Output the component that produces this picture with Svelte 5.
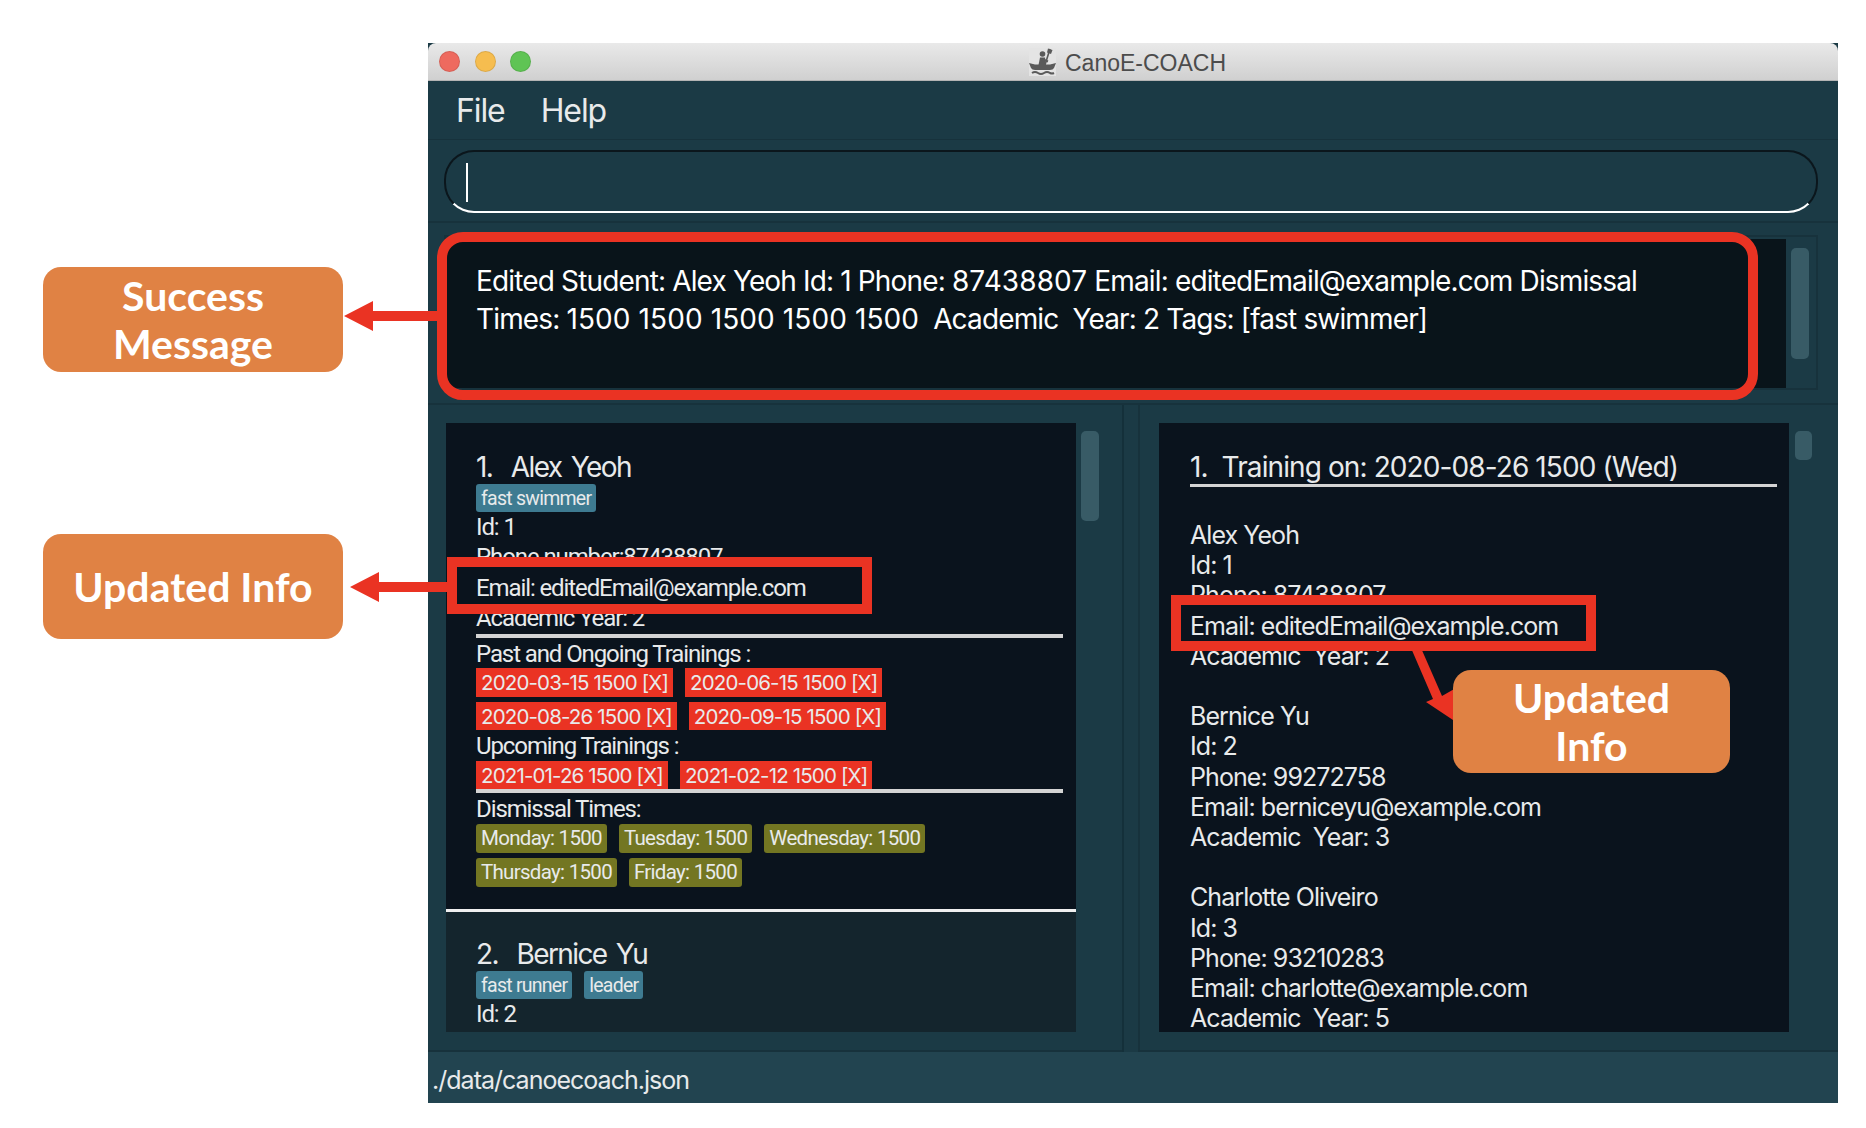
<script>
    let pastTrainings = [
        ['2020-03-15 1500 [X]', '2020-06-15 1500 [X]'],
        ['2020-08-26 1500 [X]', '2020-09-15 1500 [X]']
    ];
    let upcoming = ['2021-01-26 1500 [X]', '2021-02-12 1500 [X]'];
    let dismissal = [
        ['Monday: 1500', 'Tuesday: 1500', 'Wednesday: 1500'],
        ['Thursday: 1500', 'Friday: 1500']
    ];
    let attendees = [
        { name: 'Alex Yeoh', id: 1, phone: '87438807', email: 'editedEmail@example.com', year: 2 },
        { name: 'Bernice Yu', id: 2, phone: '99272758', email: 'berniceyu@example.com', year: 3 },
        { name: 'Charlotte Oliveiro', id: 3, phone: '93210283', email: 'charlotte@example.com', year: 5 }
    ];
</script>

<div class="page">
    <div class="window">
        <div class="titlebar">
            <div class="lights">
                <span class="light red"></span>
                <span class="light yellow"></span>
                <span class="light green"></span>
            </div>
            <div class="title">
                <svg class="app-icon" viewBox="0 0 27 28" width="27" height="28">
                    <rect width="27" height="28" fill="#e4e4e4" />
                    <circle cx="13.5" cy="6" r="2.8" fill="#5a5a5a" />
                    <path d="M11 9.5 L16 9.5 L17 17 L9.5 17 Z" fill="#5a5a5a" />
                    <path d="M21 1 L15 20" stroke="#5a5a5a" stroke-width="1.6" fill="none" />
                    <path d="M19 0.5 L23.5 2 L22 6 L18 4.5 Z" fill="#5a5a5a" />
                    <path d="M13 11 L19 13.5" stroke="#5a5a5a" stroke-width="2" fill="none" />
                    <path d="M0 15 L6 16.5 L21 16.5 L27 15 L25 20 Q24 22 21 22 L6 22 Q3 22 2 20 Z" fill="#5a5a5a" />
                    <path d="M3 25 Q6 23 9 25 Q12 27 15 25 Q18 23 21 25 Q23 26 25 25" stroke="#5a5a5a" stroke-width="2" fill="none" />
                </svg>
                <span class="title-text">CanoE-COACH</span>
            </div>
        </div>

        <div class="menubar">
            <span>File</span>
            <span>Help</span>
        </div>

        <div class="command-row">
            <div class="command-box"><span class="caret"></span></div>
        </div>

        <div class="result-row">
            <div class="result-frame">
                <div class="result-text">
                    <p>Edited Student: Alex Yeoh Id: 1 Phone: <span class="num">87438807</span> Email: editedEmail@example.com Dismissal Times: <span class="num">1500 1500 1500 1500 1500</span>&nbsp; Academic&nbsp; Year: 2 Tags: [fast swimmer]</p>
                </div>
                <div class="scroll-track"><div class="thumb result-thumb"></div></div>
            </div>
        </div>

        <div class="split">
            <div class="pane left-pane">
                <div class="list">
                    <div class="card selected">
                        <div class="name">1.  Alex Yeoh</div>
                        <div class="tags"><span class="tag">fast swimmer</span></div>
                        <div class="line">Id: 1</div>
                        <div class="line">Phone number:87438807</div>
                        <div class="line">Email: editedEmail@example.com</div>
                        <div class="line">Academic Year: 2</div>
                        <div class="rule"></div>
                        <div class="line">Past and Ongoing Trainings :</div>
                        <div class="chip-block past">
                            {#each pastTrainings as row}
                                <div class="chip-row">
                                    {#each row as chip}<span class="chip danger">{chip}</span>{/each}
                                </div>
                            {/each}
                        </div>
                        <div class="line">Upcoming Trainings :</div>
                        <div class="chip-row upcoming">
                            {#each upcoming as chip}<span class="chip danger">{chip}</span>{/each}
                        </div>
                        <div class="rule flush"></div>
                        <div class="line">Dismissal Times:</div>
                        <div class="chip-block times">
                            {#each dismissal as row}
                                <div class="chip-row">
                                    {#each row as chip}<span class="chip olive">{chip}</span>{/each}
                                </div>
                            {/each}
                        </div>
                    </div>
                    <div class="card second">
                        <div class="name">2.  Bernice Yu</div>
                        <div class="tags">
                            <span class="tag">fast runner</span>
                            <span class="tag">leader</span>
                        </div>
                        <div class="line">Id: 2</div>
                    </div>
                </div>
                <div class="scroll-track"><div class="thumb left-thumb"></div></div>
            </div>
            <div class="pane-divider"></div>
            <div class="pane right-pane">
                <div class="list">
                    <div class="training">
                        <div class="training-head">1.  Training on: 2020-08-26 1500 (Wed)</div>
                        {#each attendees as person}
                            <div class="person">
                                <div>{person.name}</div>
                                <div>Id: {person.id}</div>
                                <div>Phone: {person.phone}</div>
                                <div>Email: {person.email}</div>
                                <div>Academic  Year: {person.year}</div>
                            </div>
                        {/each}
                    </div>
                </div>
                <div class="scroll-track"><div class="thumb right-thumb"></div></div>
            </div>
        </div>

        <div class="statusbar">./data/canoecoach.json</div>
    </div>

    <!-- annotations drawn on top of the screenshot -->
    <svg class="arrows" viewBox="0 0 1866 1128" width="1866" height="1128">
        <path d="M344 316 L373 301 L373 311 L440 311 L440 321 L373 321 L373 331 Z" />
        <path d="M350 587 L379 572 L379 582 L450 582 L450 592 L379 592 L379 602 Z" />
        <path d="M1411 648 L1421 648 L1442 696 L1456 688 L1456 722 L1426 702 L1433 699 Z" />
    </svg>
    <div class="hl result-hl"></div>
    <div class="hl email-left"></div>
    <div class="hl email-right"></div>
    <div class="note note-success"><span>Success</span><span>Message</span></div>
    <div class="note note-left"><span>Updated Info</span></div>
    <div class="note note-right"><span>Updated</span><span>Info</span></div>
</div>

<style>
    :global(body) {
        margin: 0;
        background: #ffffff;
    }

    .page {
        position: relative;
        width: 1866px;
        height: 1128px;
        padding: 43px 0 0 428px;
        box-sizing: border-box;
        overflow: hidden;
        font-family: Inter, "Liberation Sans", sans-serif;
        color: #e8eaeb;
    }

    .window {
        width: 1410px;
        height: 1060px;
        display: flex;
        flex-direction: column;
        background: #1b3a45;
    }

    .titlebar {
        height: 38px;
        flex: none;
        display: flex;
        align-items: center;
        background: linear-gradient(#e9e9e9, #d0d0d0);
        border-radius: 8px 8px 0 0;
        border-bottom: 1px solid #b4b4b4;
        box-sizing: border-box;
    }

    .lights {
        display: flex;
        gap: 14.5px;
        padding-left: 11px;
    }

    .light {
        width: 21px;
        height: 21px;
        box-sizing: border-box;
        border-radius: 50%;
        border: 1px solid rgba(0, 0, 0, 0.1);
    }

    .red { background: #ee6a5f; }
    .yellow { background: #f6bd4f; }
    .green { background: #5fc454; }

    .title {
        margin-left: 498px;
        display: flex;
        align-items: center;
        gap: 9px;
        font-family: "Liberation Sans", sans-serif;
        font-size: 23px;
        color: #4c4c4c;
    }

    .title-text {
        padding-top: 3px;
    }

    .menubar {
        height: 59px;
        flex: none;
        display: flex;
        align-items: center;
        gap: 36px;
        padding-left: 28px;
        box-sizing: border-box;
        border-bottom: 1px solid #17323c;
        font-size: 32px;
        letter-spacing: -1.1px;
    }

    .command-row {
        height: 83px;
        flex: none;
        padding: 10px 20px 0 16px;
        box-sizing: border-box;
        border-bottom: 2px solid #17323c;
    }

    .command-box {
        height: 63px;
        box-sizing: border-box;
        border: 2px solid #0b161c;
        border-bottom-color: #ffffff;
        border-radius: 30px;
        padding: 11px 0 0 20px;
    }

    .caret {
        display: block;
        width: 2px;
        height: 39px;
        background: #ffffff;
    }

    .result-row {
        height: 180px;
        flex: none;
        padding: 12px 20px 0 16px;
        box-sizing: border-box;
    }

    .result-frame {
        height: 155px;
        display: flex;
        box-sizing: border-box;
        border: 2px solid #17323c;
        padding-top: 2px;
    }

    .result-text {
        width: 1340px;
        height: 149px;
        flex: none;
        box-sizing: border-box;
        background: #09141a;
        padding: 24px 0 0 30px;
        font-size: 28px;
        line-height: 37.5px;
        letter-spacing: -0.85px;
        color: #ffffff;
    }

    .result-text p {
        margin: 0;
        max-width: 1200px;
    }

    .num {
        letter-spacing: 0.1px;
    }

    .scroll-track {
        flex: none;
        padding-left: 5px;
    }

    .thumb {
        width: 18px;
        border-radius: 5px;
        background: #385b66;
    }

    .result-thumb {
        height: 111px;
        margin-top: 9px;
    }

    .split {
        height: 649px;
        flex: none;
        display: flex;
        border-top: 2px solid #17323c;
        box-sizing: border-box;
    }

    .pane {
        display: flex;
        align-items: flex-start;
        padding-top: 18px;
        box-sizing: border-box;
        border-bottom: 2px solid #17323c;
    }

    .left-pane {
        width: 694px;
        flex: none;
        padding-left: 18px;
    }

    .pane-divider {
        width: 2px;
        flex: none;
        margin-right: 16px;
        background: #14303a;
    }

    .right-pane {
        flex: 1;
        padding-left: 19px;
        border-left: 2px solid #17323c;
        margin-left: -2px;
    }

    .list {
        width: 630px;
        height: 609px;
        flex: none;
        overflow: hidden;
        background: #0a131d;
    }

    .left-thumb {
        height: 90px;
        margin-top: 8px;
    }

    .right-thumb {
        height: 29px;
        margin-top: 8px;
        width: 17px;
        margin-left: 1px;
    }

    .card {
        padding: 27px 13px 22px 30px;
        border-bottom: 3px solid #f0f0f0;
    }

    .card.second {
        padding-top: 25px;
        padding-bottom: 10px;
        border-bottom: none;
        background: #14252d;
    }

    .name {
        white-space: pre;
        font-size: 28px;
        line-height: 34px;
        letter-spacing: -1.6px;
        word-spacing: 3px;
    }

    .tags {
        display: flex;
        gap: 12px;
        height: 27px;
    }

    .tag {
        height: 28px;
        line-height: 29px;
        padding: 0 5px;
        border-radius: 3px;
        background: #3e7b91;
        font-family: Roboto, sans-serif;
        font-size: 19.5px;
        letter-spacing: -0.75px;
    }

    .line {
        padding-top: 1px;
        margin-bottom: -1px;
        font-family: Roboto, sans-serif;
        font-size: 24px;
        line-height: 30.4px;
        letter-spacing: -1.1px;
    }

    .rule {
        height: 4px;
        background: #d4d4d4;
        margin-top: 1px;
    }

    .rule.flush {
        margin-top: 0;
    }

    .chip-block {
        display: flex;
        flex-direction: column;
        gap: 5px;
    }

    .chip-block.past .chip-row {
        height: 28.5px;
    }

    .chip-block.times {
        margin-top: 0.6px;
    }

    .chip-row {
        display: flex;
        gap: 12px;
        height: 29px;
    }

    .chip-row.upcoming {
        margin-top: 0.6px;
        height: 28px;
    }

    .chip {
        line-height: 29px;
        padding: 0 5px;
        font-size: 20.5px;
        letter-spacing: -0.85px;
    }

    .danger {
        background: #ea3323;
    }

    .olive {
        background: #737622;
        border-radius: 3px;
        font-family: Roboto, sans-serif;
        letter-spacing: -0.7px;
    }

    .training {
        padding: 27px 12px 0 31px;
    }

    .training-head {
        white-space: pre;
        font-size: 28px;
        line-height: 34px;
        letter-spacing: -0.9px;
        border-bottom: 3px solid #d4d4d4;
        margin-bottom: 33px;
    }

    .person {
        font-size: 25px;
        line-height: 30.2px;
        letter-spacing: -0.93px;
        margin-bottom: 30.2px;
    }

    .person div {
        white-space: pre;
    }

    .statusbar {
        height: 51px;
        flex: none;
        box-sizing: border-box;
        background: #224450;
        padding: 5px 0 0 4px;
        font-size: 25px;
        line-height: 46px;
        letter-spacing: -0.98px;
    }

    .arrows {
        position: absolute;
        left: 0;
        top: 0;
        fill: #ea3323;
    }

    .hl {
        position: absolute;
        box-sizing: border-box;
        border: 10px solid #ea3323;
    }

    .result-hl {
        left: 437px;
        top: 232px;
        width: 1321px;
        height: 168px;
        border-radius: 26px;
    }

    .email-left {
        left: 447px;
        top: 557px;
        width: 425px;
        height: 57px;
    }

    .email-right {
        left: 1171px;
        top: 595px;
        width: 425px;
        height: 56px;
    }

    .note {
        position: absolute;
        display: flex;
        flex-direction: column;
        align-items: center;
        justify-content: center;
        background: #e08244;
        border-radius: 18px;
        color: #ffffff;
        font-family: Lato, sans-serif;
        font-weight: 700;
        font-size: 41px;
        line-height: 48px;
    }

    .note-success {
        left: 43px;
        top: 267px;
        width: 300px;
        height: 105px;
    }

    .note-left {
        left: 43px;
        top: 534px;
        width: 300px;
        height: 105px;
    }

    .note-right {
        left: 1453px;
        top: 670px;
        width: 277px;
        height: 103px;
    }
</style>
